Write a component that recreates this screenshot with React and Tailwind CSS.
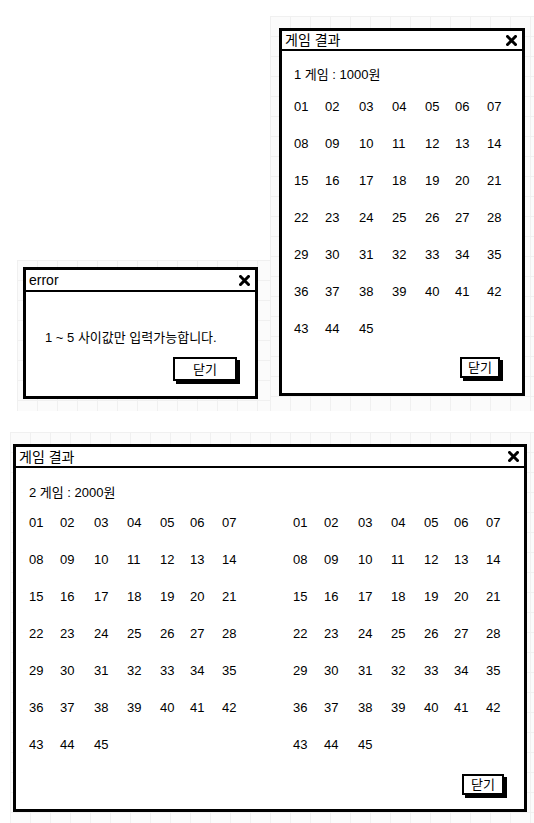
import React from "react";

const font = { fontFamily: '"Liberation Sans", "Noto Sans CJK KR", sans-serif' };
const nums = Array.from({ length: 45 }, (_, i) => String(i + 1).padStart(2, "0"));

const gridBg =
  "bg-[#fbfbfb] bg-[linear-gradient(#f0f0f0_1px,transparent_1px),linear-gradient(90deg,#f0f0f0_1px,transparent_1px)] bg-[size:20px_20px]";

function CloseX() {
  return (
    <svg width="11" height="11" viewBox="0 0 11 11" className="shrink-0">
      <path d="M1.5 1.5 L9.5 9.5 M9.5 1.5 L1.5 9.5" stroke="#000" strokeWidth="3" strokeLinecap="square" />
    </svg>
  );
}

function TitleBar({ title, h }) {
  return (
    <div className={`flex items-center justify-between border-b-2 border-black pl-[3px] pr-[5px] ${h}`}>
      <span className="text-[14px] leading-none text-black">{title}</span>
      <CloseX />
    </div>
  );
}

function CloseButton({ w, h }) {
  return (
    <button className={`flex items-center justify-center border-2 border-black bg-white text-[13px] leading-none text-black shadow-[3px_3px_0_#000] ${w} ${h}`}>
      닫기
    </button>
  );
}

function Numbers() {
  return (
    <div className="grid grid-cols-[31px_34px_33px_33px_30px_32px_32px] auto-rows-[37px]">
      {nums.map((n) => (
        <div key={n} className="flex items-center text-[13px] text-black">
          {n}
        </div>
      ))}
    </div>
  );
}

export default function App() {
  return (
    <div className="w-[534px] h-[823px] bg-white overflow-hidden" style={font}>
      <div className="flex items-end pt-[16px]">
        {/* error dialog */}
        <div className={`ml-[17px] w-[253px] h-[151px] pl-[6px] pt-[7px] ${gridBg}`}>
          <div className="w-[235px] h-[132px] border-[3px] border-black bg-white flex flex-col">
            <TitleBar title="error" h="h-[22px]" />
            <div className="mt-[36px] h-[20px] pl-[19px] flex items-center text-[13px] text-black">
              1 ~ 5 사이값만 입력가능합니다.
            </div>
            <div className="mt-[9px] flex justify-end pr-[18px]">
              <CloseButton w="w-[64px]" h="h-[24px]" />
            </div>
          </div>
        </div>

        {/* game result 1 */}
        <div className={`w-[264px] h-[395px] pl-[9px] pt-[12px] ${gridBg}`}>
          <div className="w-[246px] h-[368px] border-[3px] border-black bg-white flex flex-col">
            <TitleBar title="게임 결과" h="h-[20px]" />
            <div className="pl-[12px]">
              <div className="mt-[14px] h-[20px] flex items-center text-[13px] text-black">1 게임 : 1000원</div>
              <div className="mt-[3px]">
                <Numbers />
              </div>
            </div>
            <div className="mt-[10px] flex justify-end pr-[22px]">
              <CloseButton w="w-[40px]" h="h-[21px]" />
            </div>
          </div>
        </div>
      </div>

      {/* game result 2 */}
      <div className={`mt-[21px] ml-[10px] w-[524px] h-[391px] pl-[3px] pt-[12px] ${gridBg}`}>
        <div className="w-[514px] h-[368px] border-[3px] border-black bg-white flex flex-col">
          <TitleBar title="게임 결과" h="h-[21px]" />
          <div className="pl-[13px]">
            <div className="mt-[15px] h-[20px] flex items-center text-[13px] text-black">2 게임 : 2000원</div>
            <div className="mt-[1px] flex gap-[39px]">
              <Numbers />
              <Numbers />
            </div>
          </div>
          <div className="mt-[11px] flex justify-end pr-[20px]">
            <CloseButton w="w-[42px]" h="h-[21px]" />
          </div>
        </div>
      </div>
    </div>
  );
}
